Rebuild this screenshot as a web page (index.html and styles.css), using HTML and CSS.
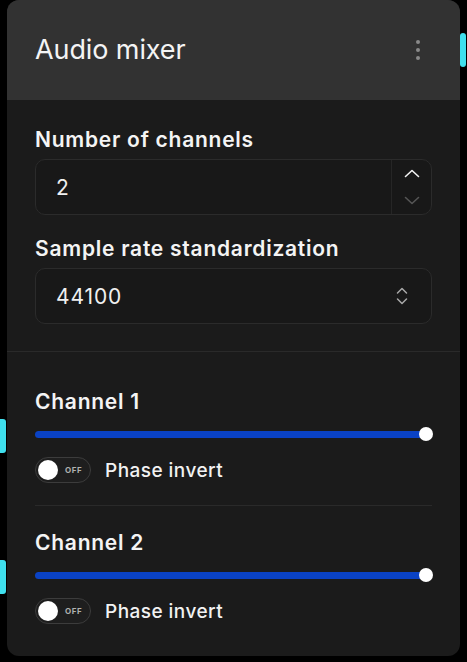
FILE: index.html
```html
<!DOCTYPE html>
<html lang="en">
<head>
<meta charset="utf-8">
<title>Audio mixer</title>
<link rel="stylesheet" href="styles.css">
</head>
<body>
<div class="panel">
  <header class="header">
    <h1 class="title">Audio mixer</h1>
    <div class="kebab"><span></span><span></span><span></span></div>
  </header>
  <section class="settings">
    <div class="field">
      <label class="label">Number of channels</label>
      <div class="box number">
        <span class="value">2</span>
        <div class="stepper">
          <span class="step up"><svg width="16" height="9" viewBox="0 0 16 9"><path d="M1.5 7.5 L8 1.5 L14.5 7.5" fill="none" stroke="#f2f2f2" stroke-width="1.6" stroke-linecap="round" stroke-linejoin="round"/></svg></span>
          <span class="step down"><svg width="16" height="9" viewBox="0 0 16 9"><path d="M1.5 1.5 L8 7.5 L14.5 1.5" fill="none" stroke="#555" stroke-width="1.6" stroke-linecap="round" stroke-linejoin="round"/></svg></span>
        </div>
      </div>
    </div>
    <div class="field">
      <label class="label">Sample rate standardization</label>
      <div class="box select">
        <span class="value">44100</span>
        <svg class="updown" width="14" height="20" viewBox="0 0 14 20"><path d="M2.5 7 L7 2.5 L11.5 7 M2.5 13 L7 17.5 L11.5 13" fill="none" stroke="#a8a8a8" stroke-width="1.5" stroke-linecap="round" stroke-linejoin="round"/></svg>
      </div>
    </div>
  </section>
  <section class="channels">
    <div class="channel">
      <div class="label">Channel 1</div>
      <div class="slider"><div class="track"></div><div class="thumb"></div></div>
      <div class="toggle-row">
        <div class="toggle"><span class="knob"></span><span class="off">OFF</span></div>
        <span class="toggle-label">Phase invert</span>
      </div>
    </div>
    <div class="channel">
      <div class="label">Channel 2</div>
      <div class="slider"><div class="track"></div><div class="thumb"></div></div>
      <div class="toggle-row">
        <div class="toggle"><span class="knob"></span><span class="off">OFF</span></div>
        <span class="toggle-label">Phase invert</span>
      </div>
    </div>
  </section>
</div>
<span class="handle handle-r"></span>
<span class="handle handle-l1"></span>
<span class="handle handle-l2"></span>
</body>
</html>
```
FILE: styles.css
```css
html, body {
  margin: 0;
  padding: 0;
  background: #000;
}
body {
  font-family: Inter, "Noto Sans", sans-serif;
  color: #f2f2f2;
  width: 467px;
  height: 662px;
  position: relative;
  overflow: hidden;
}
.panel {
  margin: 0 7px;
  width: 453px;
  height: 656px;
  background: #1b1b1b;
  border-radius: 12px;
  overflow: hidden;
  display: flex;
  flex-direction: column;
}
.header {
  height: 100px;
  flex: none;
  background: #323232;
  display: flex;
  align-items: center;
  justify-content: space-between;
  padding: 0 40px 0 28px;
  box-sizing: border-box;
}
.title {
  margin: 0;
  font-size: 27px;
  font-weight: 400;
  line-height: 32px;
  color: #f4f4f4;
  letter-spacing: -0.1px;
}
.kebab {
  display: flex;
  flex-direction: column;
  gap: 4px;
}
.kebab span {
  width: 4px;
  height: 4px;
  border-radius: 50%;
  background: #8a8a8a;
}
.settings {
  padding: 28px 28px 27px;
  border-bottom: 1px solid #2a2a2a;
  display: flex;
  flex-direction: column;
  gap: 22px;
}
.field {
  display: flex;
  flex-direction: column;
  gap: 7px;
}
.label {
  font-size: 21px;
  font-weight: 600;
  line-height: 24px;
  letter-spacing: 0.75px;
  color: #f4f4f4;
}
.box {
  height: 56px;
  box-sizing: border-box;
  border: 1px solid #2b2b2b;
  border-radius: 10px;
  background: #181818;
  display: flex;
  align-items: center;
  padding-left: 20px;
}
.value {
  flex: 1;
  font-size: 21px;
  font-weight: 400;
  letter-spacing: 0.9px;
  color: #f0f0f0;
}
.stepper {
  width: 39px;
  align-self: stretch;
  border-left: 1px solid #262626;
  display: flex;
  flex-direction: column;
}
.step {
  flex: 1;
  display: flex;
  align-items: center;
  justify-content: center;
}
.select {
  padding-right: 22px;
}
.channels {
  padding: 38px 28px 0;
}
.channel + .channel {
  margin-top: 22px;
  border-top: 1px solid #2a2a2a;
  padding-top: 25px;
}
.slider {
  position: relative;
  height: 16px;
  margin-top: 12px;
  display: flex;
  align-items: center;
}
.track {
  width: 391px;
  height: 7px;
  border-radius: 4px;
  background: #0a42c4;
}
.thumb {
  position: absolute;
  left: 384px;
  top: 1px;
  width: 14px;
  height: 14px;
  border-radius: 50%;
  background: #fff;
}
.toggle-row {
  margin-top: 15px;
  display: flex;
  align-items: center;
  gap: 14px;
}
.toggle {
  width: 56px;
  height: 26px;
  box-sizing: border-box;
  border: 1.5px solid #3c3c3c;
  border-radius: 13px;
  background: #1e1e1e;
  display: flex;
  align-items: center;
  padding-left: 2px;
  gap: 7px;
}
.knob {
  width: 20px;
  height: 20px;
  border-radius: 50%;
  background: #fff;
}
.off {
  font-size: 8px;
  font-weight: 700;
  letter-spacing: 0.6px;
  color: #b0b0b0;
}
.toggle-label {
  font-size: 19px;
  font-weight: 500;
  letter-spacing: 0.45px;
  color: #f2f2f2;
}
.handle {
  position: absolute;
  width: 6px;
  height: 34px;
  background: #3fe0ee;
  border-radius: 3px;
}
.handle-r { right: 1px; top: 33px; }
.handle-l1 { left: 0; top: 419px; border-radius: 0 3px 3px 0; }
.handle-l2 { left: 0; top: 560px; border-radius: 0 3px 3px 0; }
```
